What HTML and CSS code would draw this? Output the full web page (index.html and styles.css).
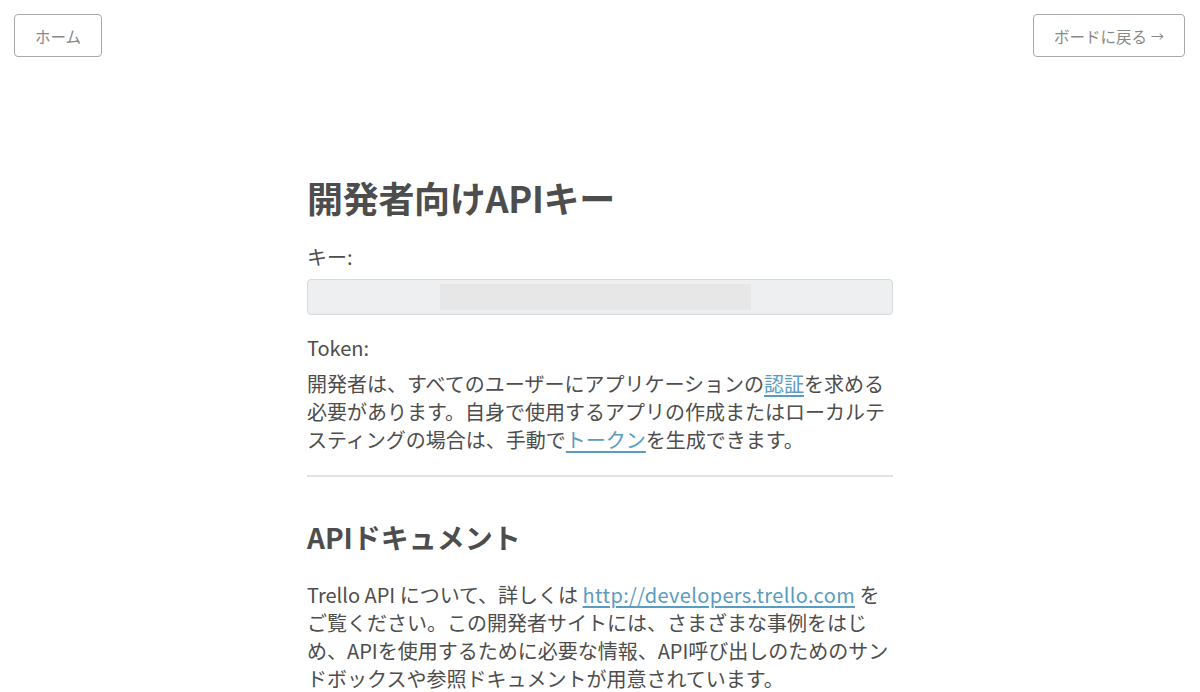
FILE: index.html
```html
<!DOCTYPE html>
<html lang="ja">
<head>
<meta charset="utf-8">
<title>開発者向けAPIキー</title>
<link rel="stylesheet" href="styles.css">
</head>
<body>
<header class="topbar">
  <a class="btn" href="#">ホーム</a>
  <a class="btn" href="#">ボードに戻る <span class="arrow">→</span></a>
</header>
<main class="content">
  <h1 class="title">開発者向けAPIキー</h1>
  <p class="label">キー:</p>
  <div class="key-field"><span class="key-mask"></span></div>
  <p class="label token-label">Token:</p>
  <p class="text">開発者は、すべてのユーザーにアプリケーションの<a href="#">認証</a>を求める必要があります。自身で使用するアプリの作成またはローカルテスティングの場合は、手動で<a href="#">トークン</a>を生成できます。</p>
  <hr class="divider">
  <h2 class="subtitle">APIドキュメント</h2>
  <p class="text docs">Trello API について、詳しくは <a class="url" href="#">http://developers.trello.com</a> をご覧ください。この開発者サイトには、さまざまな事例をはじめ、APIを使用するために必要な情報、API呼び出しのためのサンドボックスや参照ドキュメントが用意されています。</p>
</main>
</body>
</html>
```
FILE: styles.css
```css
html, body {
  margin: 0;
  padding: 0;
  background: #fff;
}
body {
  font-family: "Noto Sans CJK JP", "Noto Sans", sans-serif;
  color: #4d4d4d;
}
.topbar {
  display: flex;
  justify-content: space-between;
  padding: 14px 15px 0 14px;
}
.btn {
  display: flex;
  align-items: center;
  justify-content: center;
  gap: 4px;
  box-sizing: border-box;
  height: 43px;
  padding: 0 20px;
  border: 1px solid #a9a9a9;
  border-radius: 4px;
  color: #888;
  font-size: 15.5px;
  text-decoration: none;
}
.arrow {
  font-size: 13px;
}
.content {
  width: 586px;
  margin: 0 auto;
  padding-top: 116px;
}
.title {
  margin: 0;
  font-size: 36px;
  line-height: 48px;
  font-weight: 700;
  letter-spacing: -0.3px;
}
.label {
  margin: 22px 0 0;
  font-size: 20px;
  line-height: 28px;
}
.key-field {
  display: flex;
  align-items: center;
  box-sizing: border-box;
  height: 36px;
  margin-top: 8px;
  background: #edeff0;
  border: 1px solid #d6dadc;
  border-radius: 4px;
  padding-left: 132px;
}
.key-mask {
  width: 311px;
  height: 26px;
  background: #e7e7e7;
}
.token-label {
  margin-top: 19px;
}
.text {
  margin: 8px 0 0;
  font-size: 20px;
  line-height: 28px;
}
.text a {
  color: #5a9bc0;
  text-decoration: underline;
  text-underline-offset: 3px;
}
.text .url {
  letter-spacing: 0.35px;
}
.divider {
  margin: 21px 0 0;
  border: 0;
  height: 2px;
  background: #e2e2e2;
}
.subtitle {
  margin: 40px 0 0;
  font-size: 28px;
  line-height: 40px;
  font-weight: 700;
}
.docs {
  margin-top: 24px;
}
```
